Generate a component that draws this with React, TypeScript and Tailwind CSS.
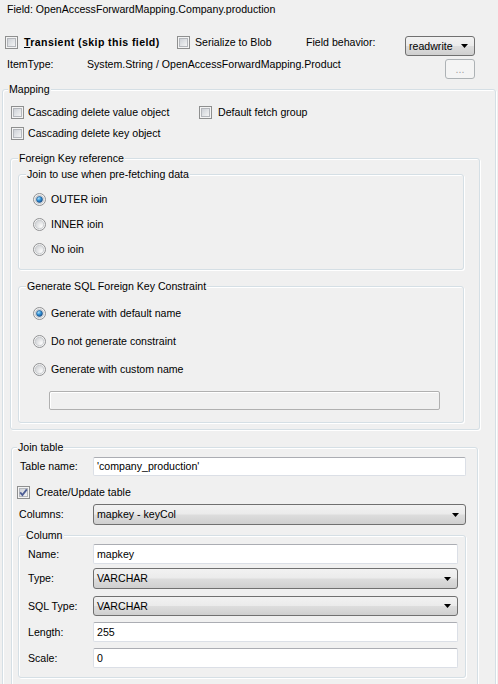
import React from "react";

const font = { fontFamily: '"Liberation Sans", Arial, sans-serif' };

function CheckBox({ checked = false }: { checked?: boolean }) {
  return (
    <svg width="13" height="13" viewBox="0 0 13 13" className="shrink-0">
      <defs>
        <linearGradient id="cbg" x1="0" y1="0" x2="1" y2="1">
          <stop offset="0" stopColor="#cbcfd5" />
          <stop offset="1" stopColor="#f6f6f6" />
        </linearGradient>
      </defs>
      <rect x="0.5" y="0.5" width="12" height="12" fill="#f4f4f4" stroke="#8e8f8f" />
      <rect x="2.5" y="2.5" width="8" height="8" fill="url(#cbg)" stroke="#b4b7bc" />
      {checked && (
        <path d="M3.2 6.4 L5.4 9 L9.8 3.4" fill="none" stroke="#4d5d95" strokeWidth="1.8" />
      )}
    </svg>
  );
}

function Radio({ checked = false }: { checked?: boolean }) {
  return (
    <svg width="13" height="13" viewBox="0 0 13 13" className="shrink-0">
      <defs>
        <radialGradient id="rbg" cx="0.7" cy="0.7" r="0.8">
          <stop offset="0" stopColor="#fbfbfb" />
          <stop offset="1" stopColor="#cfd1d4" />
        </radialGradient>
        <radialGradient id="rdot" cx="0.35" cy="0.3" r="0.8">
          <stop offset="0" stopColor="#a9e2fb" />
          <stop offset="0.5" stopColor="#2d8fd6" />
          <stop offset="1" stopColor="#174a83" />
        </radialGradient>
      </defs>
      <circle cx="6.5" cy="6.5" r="6" fill="#f4f4f4" stroke="#8f9092" />
      <circle cx="6.5" cy="6.5" r="4.3" fill="url(#rbg)" stroke="#c2c5c9" strokeWidth="0.8" />
      {checked && <circle cx="6.5" cy="6.5" r="3" fill="url(#rdot)" stroke="#1d4f86" strokeWidth="0.6" />}
    </svg>
  );
}

function Select({ value, className }: { value: string; className: string }) {
  return (
    <div
      className={`flex items-center justify-between rounded-[3px] border border-[#707070] bg-[linear-gradient(#f2f2f2_0%,#ebebeb_48%,#dddddd_52%,#cfcfcf_100%)] pl-[3px] pr-[6px] ${className}`}
    >
      <span>{value}</span>
      <svg width="7" height="4" viewBox="0 0 7 4">
        <path d="M0 0 H7 L3.5 4 Z" fill="#000" />
      </svg>
    </div>
  );
}

function TextBox({ value = "", className }: { value?: string; className: string }) {
  return (
    <div
      className={`flex items-center rounded-[2px] border border-[#dbdfe6] border-t-[#abadb3] bg-white pl-[3px] ${className}`}
    >
      {value}
    </div>
  );
}

function Group({
  label,
  labelLeft,
  className,
  children,
}: {
  label: string;
  labelLeft: string;
  className: string;
  children?: React.ReactNode;
}) {
  return (
    <div
      className={`relative shrink-0 rounded-[3px] border border-[#d5dfe5] shadow-[inset_1px_1px_0_#ffffff,1px_1px_0_#ffffff] ${className}`}
    >
      <span className={`absolute -top-[7px] bg-[#f0f0f0] px-[1px] leading-[13px] ${labelLeft}`}>{label}</span>
      {children}
    </div>
  );
}

function RadioRow({ label, checked, className }: { label: string; checked?: boolean; className: string }) {
  return (
    <div className={`flex h-[13px] items-center gap-[5px] ${className}`}>
      <Radio checked={checked} />
      <span>{label}</span>
    </div>
  );
}

function FieldRow({
  label,
  labelWidth,
  className,
  children,
}: {
  label: string;
  labelWidth: string;
  className: string;
  children: React.ReactNode;
}) {
  return (
    <div className={`flex items-center ${className}`}>
      <span className={`shrink-0 ${labelWidth}`}>{label}</span>
      {children}
    </div>
  );
}

export default function App() {
  return (
    <div
      style={font}
      className="flex h-[684px] w-[498px] flex-col overflow-hidden bg-[#f0f0f0] text-[10.6px] leading-[13px] text-black"
    >
      <div className="pl-[7px] pt-[3px]">Field: OpenAccessForwardMapping.Company.production</div>

      <div className="mt-[19px] flex h-[20px] items-start">
        <div className="ml-[5px] mt-[1px] flex w-[172px] items-center gap-[6px]">
          <CheckBox />
          <span className="font-bold tracking-[0.4px]">
            <span className="underline">T</span>ransient (skip this field)
          </span>
        </div>
        <div className="mt-[1px] flex w-[129px] items-center gap-[5px]">
          <CheckBox />
          <span>Serialize to Blob</span>
        </div>
        <div className="mt-[1px] w-[99px]">Field behavior:</div>
        <Select value="readwrite" className="mt-[1px] h-[20px] w-[70px]" />
      </div>

      <div className="mt-[4px] flex h-[20px] items-start">
        <span className="ml-[7px] mt-[-1px] w-[80px]">ItemType:</span>
        <span className="mt-[-1px] flex-1">System.String / OpenAccessForwardMapping.Product</span>
        <div className="mr-[23px] flex h-[20px] w-[30px] items-center justify-center rounded-[3px] border border-[#adb2b5] bg-[#f4f4f4] text-[#a0a0a0]">
          ...
        </div>
      </div>

      <Group label="Mapping" labelLeft="left-[5px]" className="ml-[2px] mt-[10px] h-[620px] w-[494px]">
        <div className="ml-[8px] mt-[16px] flex h-[13px] items-center">
          <div className="flex w-[188px] items-center gap-[4px]">
            <CheckBox />
            <span>Cascading delete value object</span>
          </div>
          <div className="flex items-center gap-[6px]">
            <CheckBox />
            <span>Default fetch group</span>
          </div>
        </div>
        <div className="ml-[8px] mt-[8px] flex h-[13px] items-center gap-[4px]">
          <CheckBox />
          <span>Cascading delete key object</span>
        </div>

        <Group label="Foreign Key reference" labelLeft="left-[7px]" className="ml-[7px] mt-[18px] h-[272px] w-[470px]">
          <Group
            label="Join to use when pre-fetching data"
            labelLeft="left-[7px]"
            className="ml-[7px] mt-[15px] h-[96px] w-[446px]"
          >
            <RadioRow label="OUTER ioin" checked className="ml-[14px] mt-[18px]" />
            <RadioRow label="INNER ioin" className="ml-[14px] mt-[12px]" />
            <RadioRow label="No ioin" className="ml-[14px] mt-[12px]" />
          </Group>
          <Group
            label="Generate SQL Foreign Key Constraint"
            labelLeft="left-[7px]"
            className="ml-[7px] mt-[16px] h-[137px] w-[446px]"
          >
            <RadioRow label="Generate with default name" checked className="ml-[14px] mt-[20px]" />
            <RadioRow label="Do not generate constraint" className="ml-[14px] mt-[15px]" />
            <RadioRow label="Generate with custom name" className="ml-[14px] mt-[15px]" />
            <div className="ml-[30px] mt-[15px] h-[19px] w-[391px] rounded-[2px] border border-[#b0b0b0] bg-[#f0f0f0] shadow-[inset_1px_1px_0_#ffffff]" />
          </Group>
        </Group>

        <Group label="Join table" labelLeft="left-[5px]" className="ml-[8px] mt-[17px] h-[260px] w-[467px]">
          <FieldRow label="Table name:" labelWidth="w-[73px]" className="ml-[8px] mt-[9px]">
            <TextBox value="'company_production'" className="h-[19px] w-[373px]" />
          </FieldRow>
          <div className="ml-[5px] mt-[10px] flex h-[13px] items-center gap-[6px]">
            <CheckBox checked />
            <span>Create/Update table</span>
          </div>
          <FieldRow label="Columns:" labelWidth="w-[74px]" className="ml-[7px] mt-[5px]">
            <Select value="mapkey - keyCol" className="h-[21px] w-[373px]" />
          </FieldRow>

          <Group label="Column" labelLeft="left-[6px]" className="ml-[6px] mt-[10px] h-[143px] w-[448px]">
            <FieldRow label="Name:" labelWidth="w-[65px]" className="ml-[9px] mt-[8px]">
              <TextBox value="mapkey" className="h-[20px] w-[365px]" />
            </FieldRow>
            <FieldRow label="Type:" labelWidth="w-[65px]" className="ml-[9px] mt-[4px]">
              <Select value="VARCHAR" className="h-[21px] w-[365px]" />
            </FieldRow>
            <FieldRow label="SQL Type:" labelWidth="w-[65px]" className="ml-[9px] mt-[7px]">
              <Select value="VARCHAR" className="h-[20px] w-[365px]" />
            </FieldRow>
            <FieldRow label="Length:" labelWidth="w-[65px]" className="ml-[9px] mt-[6px]">
              <TextBox value="255" className="h-[20px] w-[365px]" />
            </FieldRow>
            <FieldRow label="Scale:" labelWidth="w-[65px]" className="ml-[9px] mt-[6px]">
              <TextBox value="0" className="h-[20px] w-[365px]" />
            </FieldRow>
          </Group>
        </Group>
      </Group>
    </div>
  );
}
